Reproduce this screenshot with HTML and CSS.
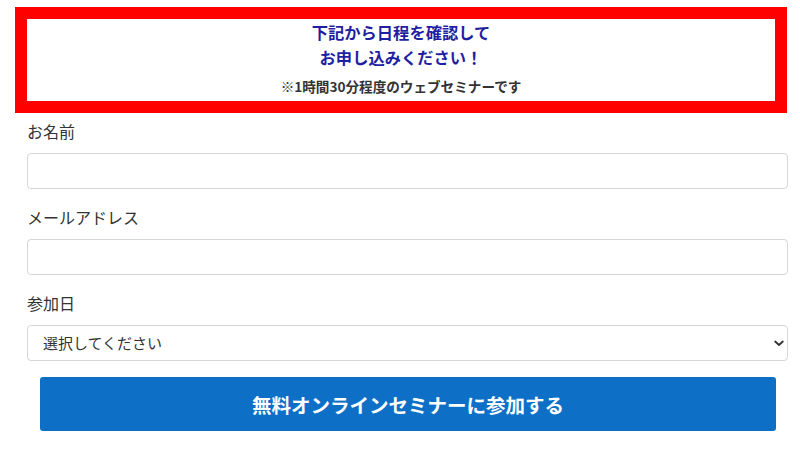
FILE: index.html
```html
<!DOCTYPE html>
<html lang="ja">
<head>
<meta charset="utf-8">
<link rel="stylesheet" href="styles.css">
</head>
<body>
<div class="page">
  <div class="banner">
    <p class="lead">下記から日程を確認して<br>お申し込みください！</p>
    <p class="note">※1時間30分程度のウェブセミナーです</p>
  </div>
  <form class="form">
    <div class="group">
      <label class="label">お名前</label>
      <input class="field" type="text">
    </div>
    <div class="group">
      <label class="label">メールアドレス</label>
      <input class="field" type="text">
    </div>
    <div class="group">
      <label class="label">参加日</label>
      <div class="select-wrap">
        <select class="field select">
          <option>選択してください</option>
        </select>
        <svg class="chev" width="10" height="7" viewBox="0 0 10 7"><path d="M1.2 1.5 L5 5 L8.8 1.5" fill="none" stroke="#333" stroke-width="1.8" stroke-linecap="round" stroke-linejoin="round"/></svg>
      </div>
    </div>
    <button class="submit" type="button">無料オンラインセミナーに参加する</button>
  </form>
</div>
</body>
</html>
```

FILE: styles.css
```css
* { box-sizing: border-box; }
html, body { margin: 0; padding: 0; background: #fff; }
body {
  font-family: "Noto Sans CJK JP", "Noto Sans", sans-serif;
  color: #333;
}
.page {
  padding: 7px 12px 0 15px;
}
.banner {
  border: 12px solid #ff0000;
  margin-right: 1px;
  background: #fff;
  text-align: center;
  padding: 0 0 5px;
}
.lead {
  margin: 0;
  color: #1f1fa3;
  font-weight: 700;
  font-size: 16.3px;
  line-height: 25px;
  padding-top: 1px;
}
.note {
  margin: 6px 0 0;
  font-size: 13.6px;
  font-weight: 700;
  line-height: 20px;
  color: #333;
}
.form {
  padding-left: 12px;
  margin-top: 6px;
}
.group {
  display: flex;
  flex-direction: column;
  margin-bottom: 16px;
}
.label {
  font-size: 16px;
  line-height: 24px;
  margin-bottom: 10px;
  color: #333;
}
.field {
  display: block;
  width: 100%;
  height: 36px;
  border: 1px solid #d6d6d6;
  border-radius: 4px;
  background: #fff;
  font-family: inherit;
  font-size: 15px;
  color: #333;
  padding: 0 15px;
  margin: 0;
  outline: none;
}
.select-wrap { position: relative; }
.select {
  appearance: none;
  -webkit-appearance: none;
  line-height: 34px;
}
.chev {
  position: absolute;
  right: 4px;
  top: 15px;
}
.submit {
  display: block;
  width: calc(100% - 25px);
  margin: 0 0 0 13px;
  height: 54px;
  border: 0;
  border-radius: 3px;
  background: #0e6fc7;
  color: #fff;
  font-family: inherit;
  font-weight: 700;
  font-size: 19.5px;
  cursor: pointer;
}
```
